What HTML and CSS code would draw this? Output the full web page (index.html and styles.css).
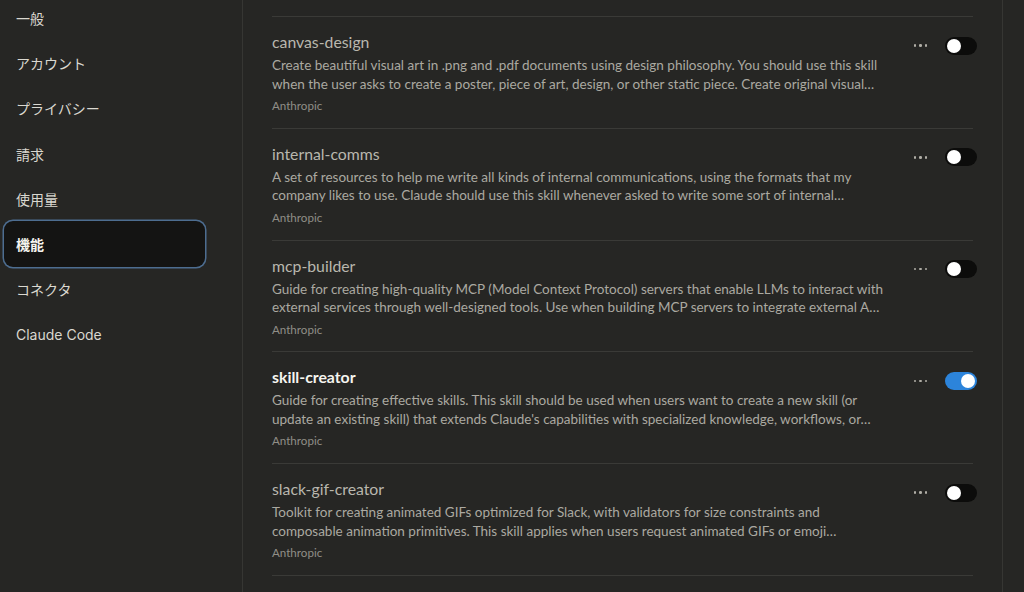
FILE: index.html
```html
<!DOCTYPE html>
<html lang="ja">
<head>
<meta charset="utf-8">
<title>設定 - 機能</title>
<link rel="stylesheet" href="styles.css">
</head>
<body>
<div class="app">
  <nav class="sidebar">
    <ul class="nav-list">
      <li class="nav-item">一般</li>
      <li class="nav-item">アカウント</li>
      <li class="nav-item">プライバシー</li>
      <li class="nav-item">請求</li>
      <li class="nav-item">使用量</li>
      <li class="nav-item is-active">機能</li>
      <li class="nav-item">コネクタ</li>
      <li class="nav-item latin">Claude Code</li>
    </ul>
  </nav>
  <main class="content">
    <ul class="skill-list">
      <li class="skill">
        <div class="skill-body">
          <div class="skill-title">brand-guidelines</div>
          <div class="skill-desc"><span class="line">Applies Anthropic's official brand colors and typography to any sort of artifact that may benefit from</span><span class="line">having Anthropic's look-and-feel. Use it when brand colors or style guidelines, visual formatting…</span></div>
          <div class="skill-meta">Anthropic</div>
        </div>
        <div class="skill-controls"><span class="dots"><i></i><i></i><i></i></span><span class="toggle"></span></div>
      </li>
      <li class="skill">
        <div class="skill-body">
          <div class="skill-title">canvas-design</div>
          <div class="skill-desc"><span class="line">Create beautiful visual art in .png and .pdf documents using design philosophy. You should use this skill</span><span class="line">when the user asks to create a poster, piece of art, design, or other static piece. Create original visual…</span></div>
          <div class="skill-meta">Anthropic</div>
        </div>
        <div class="skill-controls"><span class="dots"><i></i><i></i><i></i></span><span class="toggle"></span></div>
      </li>
      <li class="skill">
        <div class="skill-body">
          <div class="skill-title">internal-comms</div>
          <div class="skill-desc"><span class="line">A set of resources to help me write all kinds of internal communications, using the formats that my</span><span class="line">company likes to use. Claude should use this skill whenever asked to write some sort of internal…</span></div>
          <div class="skill-meta">Anthropic</div>
        </div>
        <div class="skill-controls"><span class="dots"><i></i><i></i><i></i></span><span class="toggle"></span></div>
      </li>
      <li class="skill">
        <div class="skill-body">
          <div class="skill-title">mcp-builder</div>
          <div class="skill-desc"><span class="line">Guide for creating high-quality MCP (Model Context Protocol) servers that enable LLMs to interact with</span><span class="line">external services through well-designed tools. Use when building MCP servers to integrate external A…</span></div>
          <div class="skill-meta">Anthropic</div>
        </div>
        <div class="skill-controls"><span class="dots"><i></i><i></i><i></i></span><span class="toggle"></span></div>
      </li>
      <li class="skill is-enabled">
        <div class="skill-body">
          <div class="skill-title">skill-creator</div>
          <div class="skill-desc"><span class="line">Guide for creating effective skills. This skill should be used when users want to create a new skill (or</span><span class="line">update an existing skill) that extends Claude's capabilities with specialized knowledge, workflows, or…</span></div>
          <div class="skill-meta">Anthropic</div>
        </div>
        <div class="skill-controls"><span class="dots"><i></i><i></i><i></i></span><span class="toggle on"></span></div>
      </li>
      <li class="skill">
        <div class="skill-body">
          <div class="skill-title">slack-gif-creator</div>
          <div class="skill-desc"><span class="line">Toolkit for creating animated GIFs optimized for Slack, with validators for size constraints and</span><span class="line">composable animation primitives. This skill applies when users request animated GIFs or emoji…</span></div>
          <div class="skill-meta">Anthropic</div>
        </div>
        <div class="skill-controls"><span class="dots"><i></i><i></i><i></i></span><span class="toggle"></span></div>
      </li>
      <li class="skill-end"></li>
    </ul>
  </main>
  <div class="gutter"></div>
</div>
</body>
</html>
```

FILE: styles.css
```css
* { box-sizing: border-box; }
html, body {
  margin: 0;
  padding: 0;
  height: 100%;
  background: #262624;
  overflow: hidden;
}
body {
  font-family: Lato, "Noto Sans", "Noto Sans CJK JP", sans-serif;
  color: #c2c0b6;
}
.app {
  display: flex;
  height: 592px;
}
.sidebar {
  width: 243px;
  flex: 0 0 243px;
  border-right: 1px solid #363633;
}
.nav-list {
  list-style: none;
  margin: -5px 0 0 0;
  padding: 0 0 0 4px;
}
.nav-item {
  width: 201px;
  height: 45.3px;
  display: flex;
  align-items: center;
  padding-left: 12px;
  font-family: "Noto Sans CJK JP", sans-serif;
  font-size: 14px;
  color: #dad8d0;
  border-radius: 9px;
}
.nav-item.latin {
  font-family: Inter, "Noto Sans", sans-serif;
  font-size: 14px;
}
.nav-item.is-active {
  background: #141413;
  color: #f5f4ef;
  font-weight: 700;
  box-shadow: 0 0 0 1.5px #4d6d90;
}
.content {
  width: 760px;
  flex: 0 0 760px;
  border-right: 1px solid #363633;
  padding: 0 29px;
}
.skill-list {
  list-style: none;
  margin: -95.8px 0 0 0;
  padding: 0;
}
.skill {
  display: flex;
  align-items: flex-start;
  border-top: 1px solid #3a3a37;
  padding: 14px 0 13.8px;
  height: 111.8px;
}
.skill:first-child { border-top-color: transparent; }
.skill-end {
  border-top: 1px solid #3a3a37;
  height: 20px;
}
.skill-body {
  flex: 1 1 auto;
  min-width: 0;
}
.skill-title {
  font-size: 15.8px;
  line-height: 22px;
  color: #b9b7ae;
}
.is-enabled .skill-title {
  color: #f5f4ef;
  font-weight: 700;
}
.skill-desc {
  margin-top: 3px;
  font-size: 13.5px;
  line-height: 18.5px;
  color: #aba9a1;
  height: 37px;
}
.skill-desc .line {
  display: block;
  white-space: nowrap;
}
.skill-meta {
  margin-top: 5px;
  font-size: 11.6px;
  line-height: 16px;
  color: #908e87;
}
.skill-controls {
  display: flex;
  align-items: center;
  gap: 18px;
  margin-top: 5.5px;
  margin-right: -4px;
  flex: 0 0 auto;
}
.dots {
  display: flex;
  gap: 3px;
}
.dots i {
  display: block;
  width: 2.5px;
  height: 2.5px;
  border-radius: 50%;
  background: #b0aea6;
}
.toggle {
  position: relative;
  display: block;
  width: 32px;
  height: 18px;
  border-radius: 9px;
  background: #0c0c0b;
}
.toggle::after {
  content: "";
  position: absolute;
  top: 2px;
  left: 2px;
  width: 14px;
  height: 14px;
  border-radius: 50%;
  background: #ffffff;
}
.toggle.on { background: #2c84db; }
.toggle.on::after { left: 16px; }
.gutter {
  flex: 1 1 auto;
}
```
